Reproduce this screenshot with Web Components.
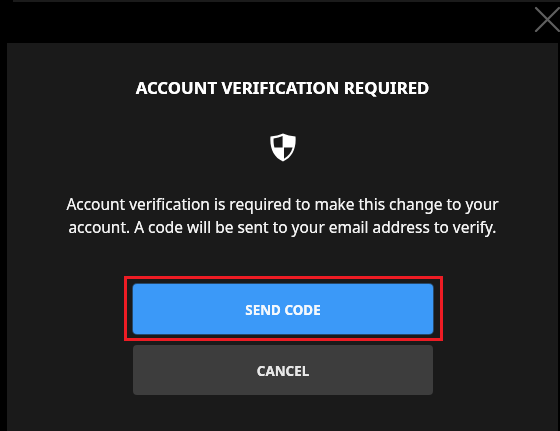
<!DOCTYPE html>
<html>
<head>
<meta charset="utf-8">
<style>
  html, body { margin: 0; height: 100%; background: #000; overflow: hidden; }
  body { font-family: "Noto Sans", "Open Sans", sans-serif; }
</style>
</head>
<body>
<verify-screen>
  <verify-dialog heading="ACCOUNT VERIFICATION REQUIRED">
    Account verification is required to make this change to your<br>account. A code will be sent to your email address to verify.
  </verify-dialog>
</verify-screen>

<script>
class VerifyScreen extends HTMLElement {
  constructor() {
    super();
    const root = this.attachShadow({mode: 'open'});
    root.innerHTML = `
      <style>
        :host {
          display: flex;
          flex-direction: column;
          position: relative;
          width: 560px;
          height: 431px;
          overflow: hidden;
          background: #000;
        }
        .strip { height: 2px; background: #1b1b1b; margin-left: 13px; }
        .tab {
          width: 120px;
          height: 12px;
          margin: 29px 0 0 13px;
          border-radius: 0 3px 0 0;
          background-image: radial-gradient(#161616 0.6px, transparent 0.7px);
          background-size: 2px 2px;
        }
        .close {
          position: absolute;
          top: 6px;
          left: 534px;
          width: 26px;
          height: 26px;
          filter: blur(0.4px);
        }
      </style>
      <div class="strip"></div>
      <div class="tab"></div>
      <slot></slot>
      <svg class="close" viewBox="0 0 26 26">
        <path d="M2 2 L25 25 M25 2 L2 25" stroke="#5f5f5f" stroke-width="2.2" fill="none" stroke-linecap="round"/>
      </svg>
    `;
  }
}

class VerifyDialog extends HTMLElement {
  constructor() {
    super();
    const root = this.attachShadow({mode: 'open'});
    root.innerHTML = `
      <style>
        :host {
          display: flex;
          flex-direction: column;
          align-items: center;
          flex: 1;
          margin: 0 2px 0 7px;
          padding-top: 33px;
          background: #1a1a1a;
          color: #f2f2f2;
          box-sizing: border-box;
        }
        h1 {
          margin: 0;
          font-size: 16.8px;
          line-height: 24px;
          font-weight: 700;
          color: #fff;
          text-shadow: 0 0 0.5px #fff;
          filter: blur(0.4px);
        }
        svg { display: block; width: 26px; height: 29px; margin: 33px 0 0; filter: blur(0.5px); }
        p {
          margin: 31px 0 0;
          font-size: 15.46px;
          line-height: 23px;
          text-align: center;
          color: #f2f2f2;
          text-shadow: 0 0 0.5px #f2f2f2;
          filter: blur(0.4px);
        }
        .focus {
          margin: 37px 0 0 2px;
          padding: 5px 7px 4px 6px;
          border: 3px solid #ed1c24;
          display: flex;
        }
        .cancel { margin: 4px 0 0 1px; }
      </style>
      <h1></h1>
      <svg viewBox="0 0 26 29">
        <path d="M13 0.5 C16.5 2 21 3 25.5 3.5 C26.5 15 22.5 24.5 13 28.5 C3.5 24.5 -0.5 15 0.5 3.5 C5 3 9.5 2 13 0.5 Z" fill="#fff"/>
        <path d="M12.6 3 C10 4.2 7 5 3.6 5.6 C3.4 8.8 3.7 11.8 4.4 14.4 L12.6 14.4 Z" fill="#1a1a1a"/>
        <path d="M14 14.6 L22.6 14.6 C21.4 19.4 18.4 23.4 14 25.8 Z" fill="#1a1a1a"/>
      </svg>
      <p><slot></slot></p>
      <div class="focus"><verify-button kind="primary">SEND CODE</verify-button></div>
      <verify-button class="cancel">CANCEL</verify-button>
    `;
    root.querySelector('h1').textContent = this.getAttribute('heading');
  }
}

class VerifyButton extends HTMLElement {
  constructor() {
    super();
    const root = this.attachShadow({mode: 'open'});
    root.innerHTML = `
      <style>
        :host {
          display: flex;
          align-items: center;
          justify-content: center;
          width: 300px;
          height: 50px;
          padding-top: 2px;
          border-radius: 4px;
          background: #3d3d3d;
          color: #e8e8e8;
          font-size: 13.4px;
          font-weight: 700;
          box-sizing: border-box;
        }
        :host([kind="primary"]) {
          background: #3b99f8;
          color: #f4f8fc;
          box-shadow: 0 0 0 1px #26496c;
        }
        span { filter: blur(0.35px); text-shadow: 0 0 0.4px currentColor; }
      </style>
      <span><slot></slot></span>
    `;
  }
}

window.customElements.define('verify-button', VerifyButton);
window.customElements.define('verify-dialog', VerifyDialog);
window.customElements.define('verify-screen', VerifyScreen);
</script>
</body>
</html>
